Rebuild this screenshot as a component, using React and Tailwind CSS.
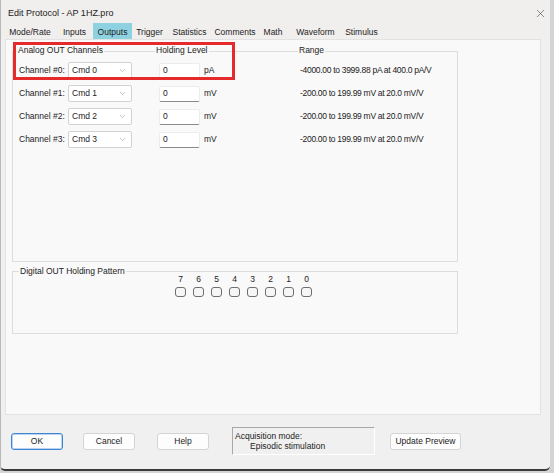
import { X, ChevronDown } from "lucide-react";

const tabs = [
  { name: "Mode/Rate", w: "w-[52px]" },
  { name: "Inputs", w: "w-[37px]" },
  { name: "Outputs", w: "w-[39px]", active: true },
  { name: "Trigger", w: "w-[35px]" },
  { name: "Statistics", w: "w-[45px]" },
  { name: "Comments", w: "w-[46px]" },
  { name: "Math", w: "w-[30px]" },
  { name: "Waveform", w: "w-[55px]" },
  { name: "Stimulus", w: "w-[37px]" },
];

const channels = [
  { n: 0, unit: "pA", range: "-4000.00 to 3999.88 pA at 400.0 pA/V" },
  { n: 1, unit: "mV", range: "-200.00 to 199.99 mV at 20.0 mV/V" },
  { n: 2, unit: "mV", range: "-200.00 to 199.99 mV at 20.0 mV/V" },
  { n: 3, unit: "mV", range: "-200.00 to 199.99 mV at 20.0 mV/V" },
];

const bits = [7, 6, 5, 4, 3, 2, 1, 0];

function Button({ children, w, primary }) {
  return (
    <div
      className={`${w} h-[17px] flex items-center justify-center rounded-[3px] bg-[#fdfdfd] text-[8.5px] leading-none ${
        primary
          ? "border border-[#3c86d4] ring-1 ring-inset ring-[#b9d4f1]"
          : "border border-[#d4d4d4]"
      }`}
    >
      {children}
    </div>
  );
}

export default function App() {
  return (
    <div className="w-[554px] h-[473px] bg-[#d4d4d4] overflow-hidden font-['Liberation_Sans',Arial,sans-serif] text-[#222]">
      <div className="relative w-[550px] h-[471px] bg-[#f0f0f0] border-l border-[#b8b8b8] border-b-2 border-b-[#3a3a3a] rounded-bl-[5px] rounded-br-[5px] flex flex-col">
        {/* title bar */}
        <div className="h-[23px] flex items-center justify-between pl-[7px] pr-[3px] pt-[3px] bg-[#f1eeee]">
          <span className="text-[9px] leading-none">Edit Protocol - AP 1HZ.pro</span>
          <X size={13} strokeWidth={1} className="text-[#333]" />
        </div>

        {/* tabs */}
        <div className="h-[16px] flex pl-[3px] bg-[#f1eeee]">
          {tabs.map((t) => (
            <div
              key={t.name}
              className={`${t.w} h-[16px] flex justify-center pt-[5px] text-[8.5px] leading-none ${
                t.active ? "bg-[#8ed1e0]" : ""
              }`}
            >
              {t.name}
            </div>
          ))}
        </div>

        {/* tab panel */}
        <div className="ml-[4px] w-[536px] h-[376px] bg-[#f9f9f9] border border-[#e2e2e2] flex flex-col">
          {/* analog group */}
          <div className="ml-[6px] mt-[11px] w-[446px] h-[211px] border border-[#dddddd] flex flex-col">
            <div className="-mt-[7px] h-[10px] grid grid-cols-[138px_143px_auto] pl-[4px] text-[8.5px] leading-[10px]">
              <span className="justify-self-start bg-[#f9f9f9] px-[1px]">Analog OUT Channels</span>
              <span className="justify-self-start bg-[#f9f9f9] px-[1px]">Holding Level</span>
              <span className="justify-self-start bg-[#f9f9f9] px-[1px]">Range</span>
            </div>
            <div className="mt-[7px] flex flex-col gap-[6px] pl-[6px]">
              {channels.map((c) => (
                <div key={c.n} className="h-[17px] flex items-center text-[8.5px] leading-none">
                  <span className="w-[49px]">Channel #{c.n}:</span>
                  <div className="w-[64px] h-[17px] flex items-center justify-between bg-white border border-[#d2d2d2] rounded-[2px] pl-[3px] pr-[4px]">
                    <span>Cmd {c.n}</span>
                    <ChevronDown size={9} strokeWidth={1.2} className="text-[#777]" />
                  </div>
                  <div className="ml-[27px] w-[41px] h-[16px] flex items-center bg-white border border-[#ececec] border-b-[#8a8a8a] rounded-[2px] pl-[3px]">
                    0
                  </div>
                  <span className="ml-[4px] w-[96px]">{c.unit}</span>
                  <span className="tracking-[-0.3px]">{c.range}</span>
                </div>
              ))}
            </div>
          </div>

          {/* digital group */}
          <div className="ml-[6px] mt-[9px] w-[446px] h-[63px] border border-[#dddddd] flex flex-col">
            <div className="-mt-[6px] h-[10px] pl-[6px] text-[8.5px] leading-[10px]">
              <span className="bg-[#f9f9f9] px-[1px]">Digital OUT Holding Pattern</span>
            </div>
            <div className="-mt-[2px] ml-[162px] flex gap-[7px]">
              {bits.map((b) => (
                <div key={b} className="w-[11px] flex flex-col items-center">
                  <span className="h-[10px] text-[8.5px] leading-[10px]">{b}</span>
                  <div className="mt-[3px] w-[11px] h-[10px] rounded-[3px] border border-[#6e6e6e] bg-[#f6f6f6]" />
                </div>
              ))}
            </div>
          </div>
        </div>

        {/* bottom buttons */}
        <div className="mt-[12px] h-[28px] flex items-center pl-[10px]">
          <Button w="w-[52px]" primary>OK</Button>
          <div className="ml-[20px]">
            <Button w="w-[52px]">Cancel</Button>
          </div>
          <div className="ml-[22px]">
            <Button w="w-[52px]">Help</Button>
          </div>
          <div className="ml-[23px] w-[143px] h-[28px] border border-[#a8a8a8] border-r-white border-b-white bg-[#f0f0f0] flex flex-col pt-[3px] text-[8.5px] leading-[10px]">
            <span className="pl-[2px]">Acquisition mode:</span>
            <span className="pl-[17px]">Episodic stimulation</span>
          </div>
          <div className="ml-[15px]">
            <Button w="w-[71px]">Update Preview</Button>
          </div>
        </div>

        {/* red annotation rectangle */}
        <div className="absolute left-[12px] top-[42px] w-[222px] h-[38px] border-[3px] border-[#e42a2a]" />
      </div>
    </div>
  );
}
